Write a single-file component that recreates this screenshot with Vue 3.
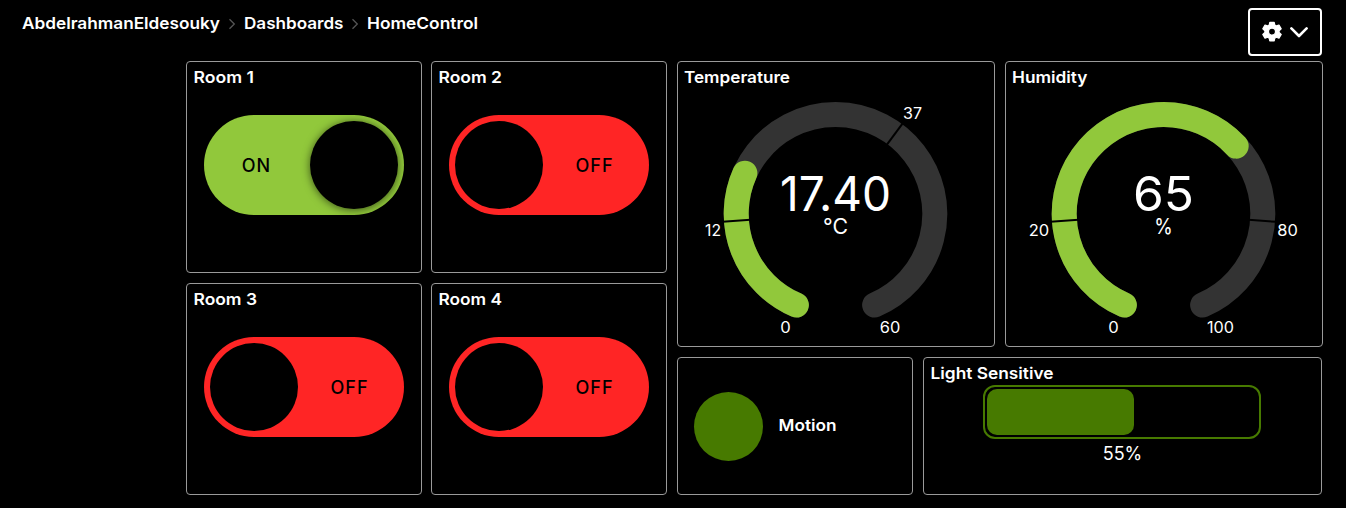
<script setup>
const crumbs = [
  { label: 'AbdelrahmanEldesouky', length: 198 },
  { label: 'Dashboards', length: 99.5 },
  { label: 'HomeControl', length: 111 },
]

const rooms = [
  { name: 'Room 1', length: 60.5, on: true },
  { name: 'Room 2', length: 63.5, on: false },
  { name: 'Room 3', length: 63.5, on: false },
  { name: 'Room 4', length: 63.5, on: false },
]

const CX = 157.5
const CY = 151.8
const R = 99.3
const START = 23.2
const SWEEP = 313.6

// Angles run clockwise from the bottom of the dial.
function point(fraction, radius) {
  const a = ((START + fraction * SWEEP) * Math.PI) / 180
  return [CX - radius * Math.sin(a), CY + radius * Math.cos(a)]
}
function arc(fraction) {
  const large = fraction * SWEEP > 180 ? 1 : 0
  return `M${point(0, R).join(' ')}A${R} ${R} 0 ${large} 1 ${point(fraction, R).join(' ')}`
}
function tick(fraction) {
  return `M${point(fraction, R - 14).join(' ')}L${point(fraction, R + 14).join(' ')}`
}

const gauges = [
  {
    name: 'Temperature', length: 106, value: '17.40', unit: '°C', fraction: 0.29, valueLength: 111, unitLength: 25,
    ticks: [12 / 60, 37 / 60],
    labels: [
      { t: '0', x: 107.5, y: 270.5, w: 10.5 },
      { t: '60', x: 212, y: 270.5, w: 20.5 },
      { t: '12', x: 35, y: 173.5, w: 16 },
      { t: '37', x: 234.5, y: 57.3, w: 19 },
    ],
  },
  {
    name: 'Humidity', length: 75.5, value: '65', unit: '%', fraction: 0.65, valueLength: 61, unitLength: 18.5,
    ticks: [0.2, 0.8],
    labels: [
      { t: '0', x: 107.5, y: 270.5, w: 10.5 },
      { t: '100', x: 214.5, y: 270.5, w: 27 },
      { t: '20', x: 33, y: 173.5, w: 20.5 },
      { t: '80', x: 281.5, y: 173.5, w: 20.5 },
    ],
  },
]

const light = 55
</script>

<template>
  <div class="page">
    <header class="top">
      <nav class="crumbs">
        <template v-for="(c, i) in crumbs" :key="c.label">
          <svg v-if="i" class="sep" width="8" height="12" viewBox="0 0 8 12"><path d="M1.5 1.2 6.3 6 1.5 10.8" /></svg>
          <svg class="label" :width="c.length" height="24"><text x="0" y="17" :textLength="c.length" lengthAdjust="spacingAndGlyphs">{{ c.label }}</text></svg>
        </template>
      </nav>
      <button class="settings" aria-label="Settings">
        <svg width="20" height="22" viewBox="0 0 20 22">
          <path class="gear" fill-rule="evenodd" d="M7.8 1.3h4.4l.6 2.7 1.5.9 2.7-.9 2.2 3.8-2.1 1.9v1.8l2.1 1.9-2.2 3.8-2.7-.9-1.5.9-.6 2.7H7.8l-.6-2.7-1.5-.9-2.7.9-2.2-3.8 2.1-1.9V9.7L.8 7.8 3 4l2.7.9 1.5-.9zM10 7.1a3.5 3.5 0 1 0 0 7 3.5 3.5 0 0 0 0-7z" />
        </svg>
        <svg width="18" height="12" viewBox="0 0 18 12"><path class="chev" d="M1.4 2.4 9 10l7.6-7.6" /></svg>
      </button>
    </header>

    <main class="board">
      <section class="rooms">
        <article v-for="r in rooms" :key="r.name" class="card">
          <h2><svg class="label" :width="r.length" height="24"><text x="0.5" y="18" :textLength="r.length" lengthAdjust="spacingAndGlyphs">{{ r.name }}</text></svg></h2>
          <div class="switch" :class="{ on: r.on }">
            <span class="knob"></span>
            <span class="state">{{ r.on ? 'ON' : 'OFF' }}</span>
          </div>
        </article>
      </section>

      <section class="sensors">
        <div class="row">
          <article v-for="g in gauges" :key="g.name" class="card gauge">
            <h2><svg class="label" :width="g.length" height="24"><text x="0" y="18" :textLength="g.length" lengthAdjust="spacingAndGlyphs">{{ g.name }}</text></svg></h2>
            <svg class="dial" width="316" height="284" viewBox="0 0 316 284">
              <path class="arc track" :d="arc(1)" />
              <path class="arc level" :d="arc(g.fraction)" />
              <path v-for="t in g.ticks" :key="t" class="tick" :d="tick(t)" />
              <text v-for="l in g.labels" :key="l.t" class="mark" :x="l.x" :y="l.y" :textLength="l.w" lengthAdjust="spacingAndGlyphs">{{ l.t }}</text>
              <text class="value" :x="CX" y="148.6" :textLength="g.valueLength" lengthAdjust="spacingAndGlyphs">{{ g.value }}</text>
              <text class="unit" :x="CX" y="172" :textLength="g.unitLength" lengthAdjust="spacingAndGlyphs">{{ g.unit }}</text>
            </svg>
          </article>
        </div>
        <div class="row">
          <article class="card motion">
            <span class="lamp"></span>
            <h2><svg class="label" width="58" height="24"><text x="0.5" y="17" textLength="58" lengthAdjust="spacingAndGlyphs">Motion</text></svg></h2>
          </article>
          <article class="card light">
            <h2><svg class="label" width="123" height="24"><text x="0.5" y="18" textLength="123" lengthAdjust="spacingAndGlyphs">Light Sensitive</text></svg></h2>
            <div class="meter"><div class="fill" :style="{ width: light + '%' }"></div></div>
            <p>{{ light }}%</p>
          </article>
        </div>
      </section>
    </main>
  </div>
</template>

<style>
html, body { background: #000; }
</style>

<style scoped>
.page {
  box-sizing: border-box;
  width: 1346px;
  height: 508px;
  overflow: hidden;
  background: #000;
  color: #fff;
  font-family: Inter, "Open Sans", sans-serif;
}
.top { display: flex; justify-content: space-between; height: 61px; padding: 0 24px 0 21.5px; }
.crumbs { display: flex; align-items: center; height: 24px; margin-top: 12px; }
.label { display: block; overflow: visible; fill: #fff; font-size: 16.4px; font-weight: 600; }
.sep { margin: 0 8px; fill: none; stroke: #555; stroke-width: 1.3; }
.settings {
  display: flex; align-items: center; justify-content: center; gap: 8px;
  box-sizing: border-box; width: 74px; height: 48px; margin-top: 8px; padding: 0;
  background: #000; border: 2px solid #fff; border-radius: 4px;
}
.gear { fill: #fff; stroke: #fff; stroke-width: 1.2; stroke-linejoin: round; }
.chev { fill: none; stroke: #fff; stroke-width: 2.6; stroke-linecap: round; stroke-linejoin: round; }
.board { display: flex; gap: 10px; padding-left: 186px; }
.rooms { display: grid; grid-template-columns: 236px 236px; grid-template-rows: 212px 212px; column-gap: 9px; row-gap: 10px; }
.sensors { display: flex; flex-direction: column; gap: 10px; }
.row { display: flex; gap: 10px; }
.card { box-sizing: border-box; border: 1px solid #9a9a9a; border-radius: 4px; padding: 3px 6px; }
h2 { height: 24px; margin: 0; }
.switch {
  display: flex; align-items: center; box-sizing: border-box;
  width: 200px; height: 100px; margin: 26px 0 0 11px; padding: 6px;
  border-radius: 50px; background: #ff2525;
}
.switch.on { flex-direction: row-reverse; background: #91c83b; }
.knob { width: 88px; height: 88px; border-radius: 50%; background: #000; }
.on .knob { box-shadow: 0 1px 8px rgba(0, 0, 0, .6); }
.state { flex: 1; padding: 1px 0 0 3px; text-align: center; color: #000; font-size: 18px; font-weight: 500; letter-spacing: 1px; line-height: 24px; }
.on .state { padding: 1px 7px 0 0; }
.gauge { display: grid; width: 318px; height: 286px; padding: 0; }
.gauge h2 { grid-area: 1 / 1; padding: 3px 6px; }
.dial { grid-area: 1 / 1; display: block; }
.arc { fill: none; stroke-width: 25; stroke-linecap: round; }
.track { stroke: #333; }
.level { stroke: #91c83b; }
.tick { stroke: #000; stroke-width: 2; }
.dial text { fill: #fff; text-anchor: middle; }
.mark { font-size: 15.3px; }
.value { font-size: 47.5px; font-weight: 400; }
.unit { font-size: 21.5px; }
.motion { display: flex; align-items: center; width: 236px; height: 138px; padding: 0 16px; gap: 15px; }
.lamp { width: 69px; height: 69px; border-radius: 50%; background: #477a00; }
.light { width: 399px; height: 138px; }
.meter {
  box-sizing: border-box; width: 278px; height: 54px; margin: 0 0 0 53px;
  padding: 2px 4px 2px 2px; border: 2px solid #477a00; border-radius: 12px;
}
.fill { height: 100%; border-radius: 10px; background: #477a00; }
.light p { margin: 3px 0 0; text-align: center; font-size: 18px; line-height: 24px; }
</style>
